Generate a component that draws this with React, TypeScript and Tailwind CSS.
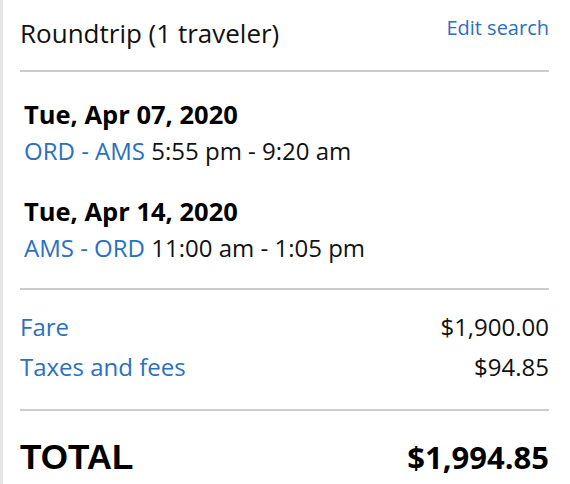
import React from 'react';

const flights = [
    { date: 'Tue, Apr 07, 2020', route: 'ORD - AMS', time: '5:55 pm - 9:20 am' },
    { date: 'Tue, Apr 14, 2020', route: 'AMS - ORD', time: '11:00 am - 1:05 pm' },
];

const charges = [
    { label: 'Fare', amount: '$1,900.00' },
    { label: 'Taxes and fees', amount: '$94.85' },
];

const App: React.FC = () => {
    return (
        <div className="w-[570px] h-[484px] bg-white flex font-['Open_Sans',sans-serif] text-[#111]">
            <div className="w-[3px] shrink-0 bg-[#e6e6e6]"></div>
            <div className="flex-1 pl-[17px] pr-[21px]">
                <div className="flex justify-between items-start pt-[14px] pb-[21px] border-b-2 border-[#cccccc]">
                    <h2 className="mt-[3px] text-[26px] leading-[32px]">Roundtrip (1 traveler)</h2>
                    <a href="#" className="text-[20px] leading-[28px] text-[#2a70c0]">Edit search</a>
                </div>

                <div className="pl-[4px] pt-[24px] pb-[22px] border-b-2 border-[#cccccc]">
                    {flights.map((f, i) => (
                        <div key={f.date} className={i > 0 ? 'mt-[24px]' : ''}>
                            <p className="text-[25.5px] leading-[36px] font-bold text-black">{f.date}</p>
                            <p className="text-[24px] leading-[37px]">
                                <span className="text-[#2a70c0]">{f.route}</span> {f.time}
                            </p>
                        </div>
                    ))}
                </div>

                <div className="pt-[17px] pb-[22px] border-b-2 border-[#cccccc]">
                    {charges.map(c => (
                        <div key={c.label} className="flex justify-between text-[24px] leading-[40px]">
                            <span className="text-[#2a70c0]">{c.label}</span>
                            <span>{c.amount}</span>
                        </div>
                    ))}
                </div>

                <div className="flex justify-between items-baseline pt-[26px] text-black">
                    <span className="font-['Liberation_Sans',Arial,sans-serif] font-bold text-[35px] leading-[40px]">TOTAL</span>
                    <span className="font-bold text-[31px] leading-[40px]">$1,994.85</span>
                </div>
            </div>
        </div>
    );
};

export default App;
